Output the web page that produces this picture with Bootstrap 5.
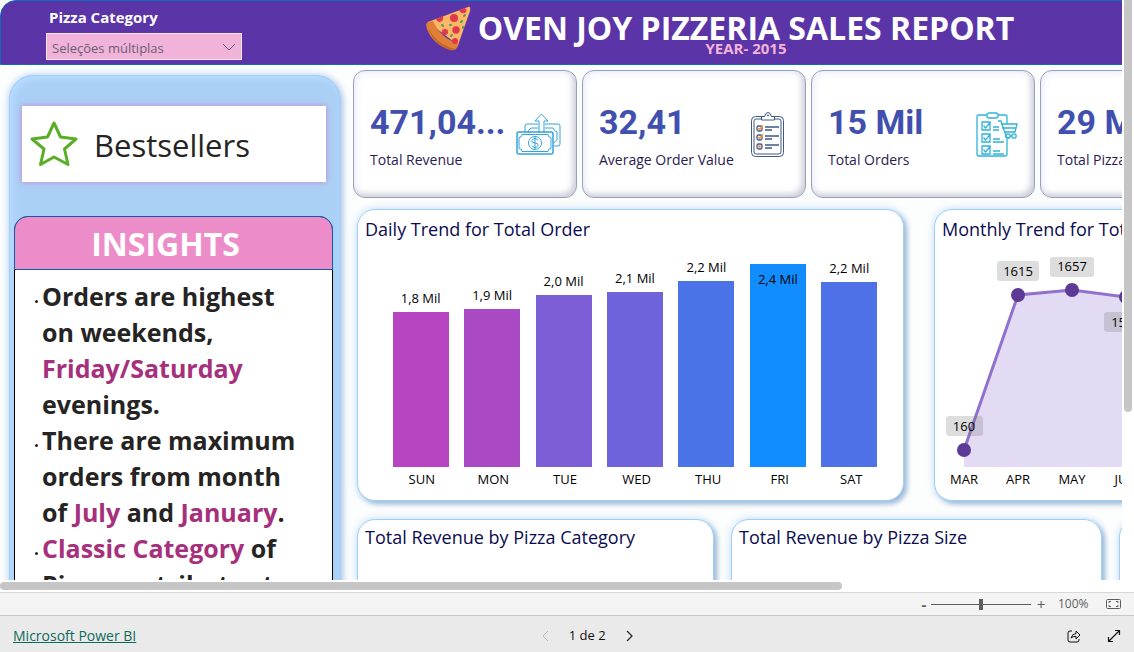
<!DOCTYPE html>
<html lang="pt">
<head>
<meta charset="utf-8">
<meta name="viewport" content="width=device-width, initial-scale=1">
<title>Oven Joy Pizzeria Sales Report</title>
<link href="https://cdn.jsdelivr.net/npm/bootstrap@5.3.0/dist/css/bootstrap.min.css" rel="stylesheet">
<style>
  body { font-family: "Open Sans", "Noto Sans", sans-serif; color: #252423; }
  .stage { display: grid; grid-template-columns: minmax(0, 1fr) 12px; grid-template-rows: minmax(0, 1fr) 12px; min-height: 0; }
  .track-v { padding: 0 2px; }
  .track-h { padding: 2px 0; }
  .thumb { background: #c6c6c6; border-radius: 4px; }
  .track-v .thumb { height: 71%; border-radius: 0 0 4px 4px; }
  .track-h .thumb { width: 75%; height: 8px; }
  .report { min-width: 1492px; background: #fcfdfd; }

  /* report header */
  .report-head { display: grid; grid-template-columns: 1fr auto 1fr; height: 65px; background: #5b34a7; border: 1px solid #0f6cbd; border-radius: 16px 16px 0 0; }
  .slicer { padding: 6px 0 0 45px; }
  .slicer label { font-size: 15px; line-height: 20px; margin-left: 3px; }
  .slicer .form-select { width: 196px; height: 27px; margin-top: 6px; padding: 2px 24px 0 5px; font-size: 13px; line-height: 22px; color: #6b6070; border: 1px solid #f7e6f2; border-radius: 0; background-color: #f2b3da;
    background-image: url("data:image/svg+xml,%3Csvg xmlns='http://www.w3.org/2000/svg' viewBox='0 0 14 8'%3E%3Cpath d='M1 1l6 6 6-6' fill='none' stroke='%236b5a70'/%3E%3C/svg%3E"); background-size: 14px 8px; background-position: right 5px center; }
  .report-title { font-size: 32px; line-height: 40px; padding-top: 7px; }
  .report-year { font-size: 15px; line-height: 16px; margin-top: -8px; color: #f2b3da; }
  .pizza { position: absolute; right: 100%; top: 4px; margin-right: 7px; }

  /* left panel */
  .side-panel { width: 331px; margin: 10px 0 0 9px; padding: 30px 6px 0 4px; background: #abd0f6; border: 1px solid #9fcffb; border-radius: 24px 24px 0 0; box-shadow: 2px 2px 7px #9dbfe0, 0 0 8px #cfe4fa, inset 3px 3px 6px #b9dbff; }
  .best { height: 76px; margin: 0 7px 34px 8px; padding: 3px 0 0 8px; background: #fff; box-shadow: 0 0 6px #c684cc; font-size: 31px; font-weight: 500; }
  .best svg { margin-top: -3px; }
  .insights { border: 1px solid #000; border-radius: 14px 14px 0 0; background: #fff; height: 620px; }
  .insights h2 { margin: -1px -1px 0; height: 54px; font-size: 32px; line-height: 54px; color: #fff; background: #ec8dca; border: 1px solid #0f5cae; border-radius: 14px 14px 0 0; padding-right: 16px; }
  .insights ul { margin: 8px 0 0; padding: 0 20px 0 27px; font-size: 25px; line-height: 36px; font-weight: 700; }
  .insights li { position: relative; }
  .insights li::before { content: ""; position: absolute; left: -7px; top: 22px; width: 3px; height: 3px; border-radius: 50%; background: #252423; }
  .insights em { font-style: normal; color: #a6307c; }

  /* KPI tiles */
  .kpis { gap: 5px; padding: 5px 0 0 13px; }
  .kpi { flex: none; width: 224px; height: 128px; padding: 0 16px; background: #fff; border: 1px solid #9aa0b8; border-radius: 12px; box-shadow: inset -3px -3px 6px #c9ccd8, inset 3px 3px 7px #f1f3ff; }
  .kpi-value { font-family: Roboto, sans-serif; font-size: 34px; line-height: 44px; padding-top: 2px; font-weight: 700; color: #4150af; }
  .kpi-label { font-size: 14px; line-height: 20px; color: #2b1b52; margin-top: 6px; }
  .kpi-icon { position: absolute; top: 38px; right: 13px; }

  /* chart tiles */
  .charts { gap: 30px; padding: 11px 0 0 17px; }
  .charts-low { gap: 17px; padding: 18px 0 0 17px; }
  .tile { flex: none; background: #fff; border: 1px solid #9fcffb; border-radius: 18px; box-shadow: 3px 3px 5px #9fbbd6, 0 0 9px #c4e0fb; }
  .tile h3 { font-size: 18px; line-height: 24px; font-weight: 500; color: #0b0b50; margin: 0; padding: 7px 7px 0; }
  .charts-low h3 { padding-top: 5px; }
  .tile-wide { width: 547px; height: 292px; }
  .tile-mid { width: 371px; height: 292px; }
  .tile-small { width: 357px; height: 292px; }
  .plot { padding: 0 18px 0 27px; height: 226px; }
  .bar-label, .axis-label { font-size: 13px; line-height: 18px; color: #000; white-space: nowrap; }
  .bar-label { margin-bottom: 5px; }
  .bar-label.inside { margin: 6px 0 0; }
  .bar { width: 56px; }
  .axis { padding: 3px 16px 0 28px; }
  .line-plot text { font-size: 13px; text-anchor: middle; }

  /* viewer bars */
  .zoom-bar { height: 24px; background: #f4f4f4; border-top: 1px solid #d8d8d8; border-bottom: 1px solid #c8c8c8; font-size: 12px; color: #605e5c; padding-right: 13px; }
  .zoom-bar button, .foot button { background: none; border: 0; padding: 0; display: flex; align-items: center; justify-content: center; color: inherit; }
  .zoom-bar .step { width: 14px; height: 20px; font-size: 15px; }
  .zoom-bar .minus { width: 8px; font-weight: 700; }
  .zoom-bar input { appearance: none; width: 100px; height: 12px; background: linear-gradient(#605e5c, #605e5c) center / 100% 1px no-repeat; margin: 0 3px; }
  .zoom-bar input::-webkit-slider-thumb { appearance: none; width: 4px; height: 11px; background: #605e5c; }
  .zoom-bar output { width: 30px; margin: 0 18px 0 10px; }
  .foot { height: 36px; background: #eaeaea; padding: 3px 0 0 13px; font-size: 13px; color: #111; }
  .foot a { color: #0e6a5c; font-size: 14px; }
  .foot .tool { width: 40px; height: 30px; }
  .foot .pager { width: 24px; height: 24px; }
</style>
</head>
<body class="vh-100 d-flex flex-column overflow-hidden">

<div class="stage flex-grow-1">
  <div class="overflow-hidden">
    <div class="report">
      <header class="report-head">
        <div class="slicer">
          <label class="d-block fw-bold text-white" for="cat">Pizza Category</label>
          <select id="cat" class="form-select"><option>Seleções múltiplas</option></select>
        </div>
        <div class="position-relative text-center">
          <svg class="pizza" width="46" height="46" viewBox="0 0 46 46" aria-hidden="true">
            <path d="M3 17L43 2Q46 1 45 6L33 40Z" fill="#ffb765"/>
            <path d="M3 17Q0 18 2 24Q8 40 26 45Q31 46 33 41L34 38Q17 35 8 16Z" fill="#e07f36"/>
            <path d="M3 22Q9 37 26 43L31 44Q29 46 25 45Q8 40 3 22Z" fill="#c4662a"/>
            <g fill="#e0394b"><circle cx="29" cy="13" r="4"/><circle cx="31" cy="25" r="3.700"/><circle cx="20" cy="27" r="3"/><circle cx="30" cy="36" r="3"/><path d="M11 14l7-3q1 5-3 6-3 0-4-3zM34 5.500l6-2.500q3 3 0 5-4 1-6-2.500z"/></g>
            <g stroke="#3fa268" stroke-width="2" stroke-linecap="round"><path d="M17 20l1 1M25 20h1M36 17l1-1M39 11l1-1M26 31l1-1M38 22v1"/></g>
          </svg>
          <h1 class="report-title fw-bold text-white m-0">OVEN JOY PIZZERIA SALES REPORT</h1>
          <div class="report-year fw-bold">YEAR- 2015</div>
        </div>
      </header>

      <div class="d-flex">
        <aside class="side-panel flex-shrink-0">
          <div class="best d-flex align-items-center">
            <svg width="48" height="48" viewBox="0 0 48 48" aria-hidden="true"><path d="M24 3L30.500 17 46 19 34.500 29 38 44.500 24 37 10.500 44.500 14 29 2 19 17.500 17Z" fill="none" stroke="#5aae25" stroke-width="3" stroke-linejoin="round"/></svg>
            <span class="ms-3">Bestsellers</span>
          </div>
          <section class="insights">
            <h2 class="fw-bold text-center">INSIGHTS</h2>
            <ul class="list-unstyled">
              <li>Orders are highest on weekends, <em>Friday/Saturday</em> evenings.</li>
              <li>There are maximum orders from month of <em>July</em> and <em>January</em>.</li>
              <li><em>Classic Category</em> of Pizza contributes to maximum sales.</li>
            </ul>
          </section>
        </aside>

        <main>
          <div class="kpis d-flex">
            <div class="kpi position-relative d-flex flex-column justify-content-center">
              <div class="kpi-value">471,04...</div><div class="kpi-label">Total Revenue</div>
              <svg class="kpi-icon" width="50" height="50" viewBox="0 0 50 50" fill="none" stroke="#35a3dc" aria-hidden="true">
                <path d="M12 24V17q0-2 2-2h11M32 15h13q2 0 2 2v18q0 2-2 2h-4M15 24q0-3 3-5h7M32 19h8q1 3 4 4v8q-2 1-3 3"/>
                <path d="M26 24V12h-4l6.500-7 6.500 7h-4V24"/>
                <rect x="4" y="23" width="36" height="22" rx="2" stroke-width="1.500"/>
                <path d="M9 25.500h26q0 3 3 3v11q-3 0-3 3H9q0-3-3-3v-11q3 0 3-3z"/>
                <circle cx="22" cy="34" r="6.500"/><path d="M25 31.500q-1-2-3-2t-3 2 3 2.500 3 2.500-3 2-3-2M22 28v12"/>
              </svg>
            </div>
            <div class="kpi position-relative d-flex flex-column justify-content-center">
              <div class="kpi-value">32,41</div><div class="kpi-label">Average Order Value</div>
              <svg class="kpi-icon" width="50" height="50" viewBox="0 0 50 50" fill="none" stroke="#3f5888" aria-hidden="true">
                <rect x="9.500" y="7.500" width="32" height="40" rx="4"/><rect x="12" y="10" width="27" height="35" rx="2"/>
                <path d="M19.500 11V7.500h3q1-4 3.500-4t3.500 4h3V11z" fill="#fff"/><circle cx="26" cy="6.500" r=".6"/>
                <g stroke-width="1.300"><rect x="15" y="17" width="5" height="5" rx="1.500"/><rect x="15" y="26" width="5" height="5" rx="1.500"/><rect x="15" y="35" width="5" height="5" rx="1.500"/><path d="M23 18h14M23 21h7M23 27h14M23 30h7M23 36h14M23 39h7"/></g>
                <path d="M16 19l1.500 1.500 3.500-4M16 28l1.500 1.500 3.500-4M16.500 36.500l2 2m0-2l-2 2" stroke="#f39237" stroke-width="1.400"/>
              </svg>
            </div>
            <div class="kpi position-relative d-flex flex-column justify-content-center">
              <div class="kpi-value">15 Mil</div><div class="kpi-label">Total Orders</div>
              <svg class="kpi-icon" width="50" height="50" viewBox="0 0 50 50" fill="none" stroke="#2fb4d6" stroke-width="1.300" aria-hidden="true">
                <path d="M16 6H8q-2 0-2 2v37q0 2 2 2h26q2 0 2-2V30M36 15V8q0-2-2-2h-7"/><rect x="16" y="4" width="11" height="5" rx="2"/>
                <path d="M19 13v8h-8v-8zM19 25v8h-8v-8zM19 37v8h-8v-8zM12.500 16.500l2 2.500 5-6M12.500 28.500l2 2.500 5-6M12.500 40.500l2 2.500 5-6M22 18h6M22 21h6M22 30h7M22 33h11M22 42h7M22 45h11"/>
                <path d="M27 12h3l5 15q0 2 3 2M30 15h16l-2 8H33M31 19h14"/><circle cx="37" cy="27" r="2.200"/><circle cx="43" cy="27" r="2.200"/><path d="M39 27h2"/>
              </svg>
            </div>
            <div class="kpi position-relative d-flex flex-column justify-content-center">
              <div class="kpi-value">29 Mil</div><div class="kpi-label">Total Pizzas Sold</div>
            </div>
          </div>

          <div class="charts d-flex">
            <section class="tile tile-wide">
              <h3>Daily Trend for Total Order</h3>
              <div class="plot d-flex">
                <div class="col d-flex flex-column align-items-center justify-content-end"><span class="bar-label">1,8 Mil</span><div class="bar" style="height:155px;background:#b744c0"></div></div>
                <div class="col d-flex flex-column align-items-center justify-content-end"><span class="bar-label">1,9 Mil</span><div class="bar" style="height:158px;background:#aa49c4"></div></div>
                <div class="col d-flex flex-column align-items-center justify-content-end"><span class="bar-label">2,0 Mil</span><div class="bar" style="height:172px;background:#7c5ed7"></div></div>
                <div class="col d-flex flex-column align-items-center justify-content-end"><span class="bar-label">2,1 Mil</span><div class="bar" style="height:175px;background:#6f63dc"></div></div>
                <div class="col d-flex flex-column align-items-center justify-content-end"><span class="bar-label">2,2 Mil</span><div class="bar" style="height:186px;background:#4a73e8"></div></div>
                <div class="col d-flex flex-column align-items-center justify-content-end"><div class="bar text-center" style="height:203px;background:#118dff"><div class="bar-label inside">2,4 Mil</div></div></div>
                <div class="col d-flex flex-column align-items-center justify-content-end"><span class="bar-label">2,2 Mil</span><div class="bar" style="height:185px;background:#4e71e7"></div></div>
              </div>
              <div class="axis d-flex text-center">
                <span class="col axis-label">SUN</span><span class="col axis-label">MON</span><span class="col axis-label">TUE</span><span class="col axis-label">WED</span><span class="col axis-label">THU</span><span class="col axis-label">FRI</span><span class="col axis-label">SAT</span>
              </div>
            </section>
            <section class="tile tile-wide overflow-hidden">
              <h3>Monthly Trend for Total Orders</h3>
              <svg class="line-plot d-block" width="545" height="250" viewBox="0 0 545 250" role="img" aria-label="Monthly orders">
                <path d="M29 209L83 54 137 49 191 56 245 52V226H29Z" fill="#e3daf3"/>
                <path d="M29 209L83 54 137 49 191 56 245 52" fill="none" stroke="#9071ce" stroke-width="3"/>
                <g fill="#5c3a96"><circle cx="29" cy="209" r="7"/><circle cx="83" cy="54" r="7"/><circle cx="137" cy="49" r="7"/><circle cx="191" cy="56" r="7"/></g>
                <g fill="#777" fill-opacity=".25"><rect x="11" y="175" width="37" height="20" rx="3"/><rect x="62" y="20" width="42" height="20" rx="3"/><rect x="115" y="16" width="44" height="20" rx="3"/><rect x="169" y="71" width="42" height="20" rx="3"/></g>
                <text x="29" y="190">160</text><text x="83" y="35">1615</text><text x="137" y="30">1657</text><text x="191" y="86">1573</text>
                <text x="29" y="243">MAR</text><text x="83" y="243">APR</text><text x="137" y="243">MAY</text><text x="191" y="243">JUN</text>
              </svg>
            </section>
          </div>

          <div class="charts-low d-flex">
            <section class="tile tile-small"><h3>Total Revenue by Pizza Category</h3></section>
            <section class="tile tile-mid"><h3>Total Revenue by Pizza Size</h3></section>
            <section class="tile tile-small"></section>
          </div>
        </main>
      </div>
    </div>
  </div>
  <div class="track-v"><div class="thumb"></div></div>
  <div class="track-h"><div class="thumb"></div></div>
</div>

<div class="zoom-bar d-flex align-items-center justify-content-end flex-shrink-0">
  <button class="step minus" type="button" aria-label="Zoom out">-</button>
  <input type="range" min="0" max="200" value="100" aria-label="Zoom">
  <button class="step" type="button" aria-label="Zoom in">+</button>
  <output>100%</output>
  <button type="button" aria-label="Fit to page">
    <svg width="15" height="12" viewBox="0 0 15 12" fill="none" stroke="#605e5c"><rect x=".5" y="1.500" width="14" height="9" rx="1"/><path d="M3 5V3.500h2M10 3.500h2V5M12 7v1.500h-2M5 8.500H3V7"/></svg>
  </button>
</div>

<footer class="foot d-flex align-items-center justify-content-between flex-shrink-0">
  <a href="#">Microsoft Power BI</a>
  <div class="d-flex align-items-center">
    <button class="pager" type="button" aria-label="Previous page"><svg width="8" height="12" viewBox="0 0 8 12" fill="none" stroke="#b8b8b8"><path d="M7 1L2 6l5 5"/></svg></button>
    <span class="mx-2 px-1">1 de 2</span>
    <button class="pager" type="button" aria-label="Next page"><svg width="8" height="12" viewBox="0 0 8 12" fill="none" stroke="#222" stroke-width="1.200"><path d="M1 1l5 5-5 5"/></svg></button>
  </div>
  <div class="d-flex ps-3">
    <button class="tool" type="button" aria-label="Share"><svg width="14" height="14" viewBox="0 0 14 14" fill="none" stroke="#111" stroke-linejoin="round"><path d="M5 2H3Q1 2 1 4v7q0 2 2 2h7q2 0 2-2v-1M4 9q1-4 5-4.500V2l4 4-4 4V7.500Q6 7 4 9z"/></svg></button>
    <button class="tool" type="button" aria-label="Full screen"><svg width="14" height="14" viewBox="0 0 14 14" fill="none" stroke="#111" stroke-width="1.200"><path d="M1.500 12.500l11-11M8 1.500h4.500V6M1.500 8v4.500H6"/></svg></button>
  </div>
</footer>

<script src="https://cdn.jsdelivr.net/npm/bootstrap@5.3.0/dist/js/bootstrap.bundle.min.js"></script>
</body>
</html>
